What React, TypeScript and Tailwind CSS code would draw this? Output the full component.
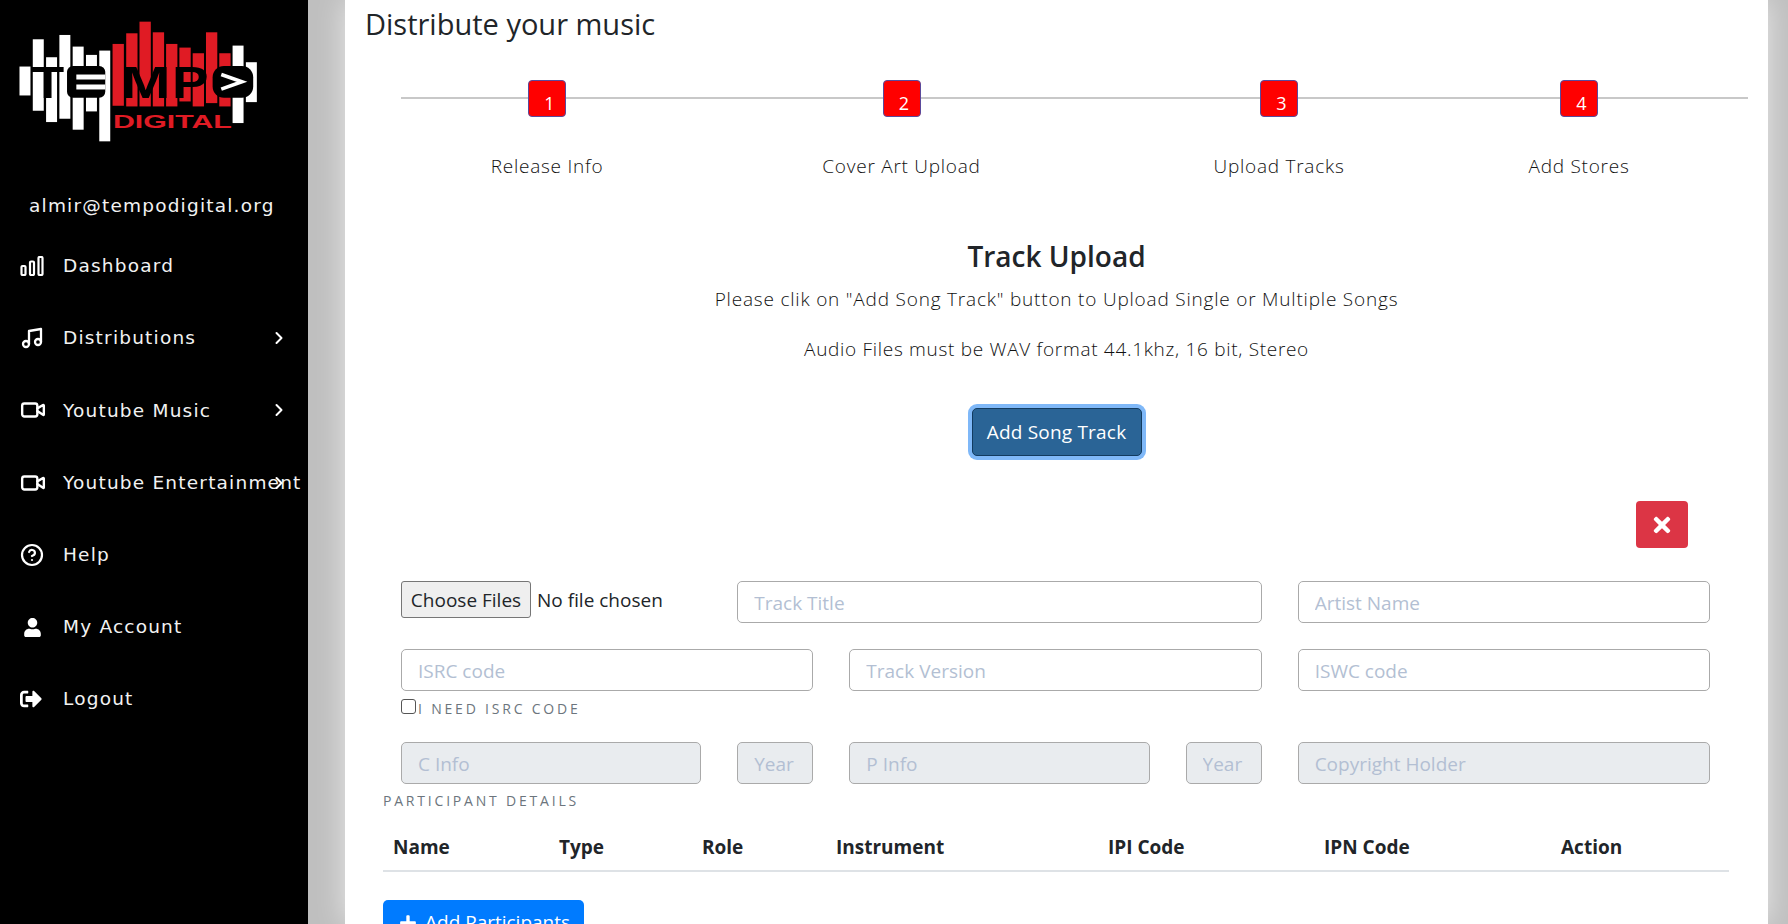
import React from "react";
import { ChevronRight, CircleHelp, Video } from "lucide-react";
import { FaPlus, FaSignOutAlt, FaTimes, FaUser } from "react-icons/fa";

const whiteBars = [
  [57, 200, 87],
  [97, 118, 215],
  [137, 172, 195],
  [177, 105, 252],
  [217, 140, 250],
  [257, 165, 170],
  [297, 152, 273],
  [698, 137, 233],
  [738, 187, 120],
];

const redBars = [
  [337, 132, 186],
  [378, 100, 220],
  [418, 65, 255],
  [458, 97, 223],
  [498, 132, 188],
  [538, 143, 162],
  [578, 160, 160],
  [618, 97, 213],
  [658, 160, 160],
];

const Logo = () => (
  <svg viewBox="50 60 730 370" className="w-[243px] h-[123px]">
    {whiteBars.map(([x, y, h]) => (
      <rect key={x} x={x} y={y} width={33} height={h} fill="#fff" />
    ))}
    {redBars.map(([x, y, h]) => (
      <rect key={x} x={x} y={y} width={34} height={h} fill="#e01b24" />
    ))}
    <g fontFamily="Liberation Sans, sans-serif" fontWeight="700" fontSize="134" fill="#000">
      <text x={92} y={294} textLength={100} lengthAdjust="spacingAndGlyphs">T</text>
      <text x={362} y={294} textLength={150} lengthAdjust="spacingAndGlyphs">M</text>
      <text x={516} y={294} textLength={110} lengthAdjust="spacingAndGlyphs">P</text>
    </g>
    <rect x={200} y={198} width={115} height={96} rx={18} fill="#000" />
    <rect x={228} y={224} width={87} height={15} fill="#fff" />
    <rect x={228} y={254} width={87} height={15} fill="#fff" />
    <rect x={638} y={198} width={122} height={96} rx={34} fill="#000" />
    <path d="M664 224 L726 246 L664 268" fill="none" stroke="#fff" strokeWidth="11" />
    <text x={338} y={385} fontFamily="Liberation Sans, sans-serif" fontWeight="700" fontSize="56" fill="#e01b24" textLength={358} lengthAdjust="spacingAndGlyphs">
      DIGITAL
    </text>
  </svg>
);

const BarsIcon = () => (
  <svg viewBox="0 0 24 20" className="w-6 h-5" fill="none" stroke="#fff" strokeWidth="2.2">
    <rect x="1.5" y="10" width="4" height="9" rx="1" />
    <rect x="10" y="5.5" width="4" height="13.5" rx="1" />
    <rect x="18.5" y="1" width="4" height="18" rx="1" />
  </svg>
);

const MusicIcon = () => (
  <svg viewBox="0 0 24 24" className="w-6 h-6" fill="none" stroke="#fff" strokeWidth="2.3" strokeLinecap="round" strokeLinejoin="round">
    <path d="M9 18V5l12-2v13" />
    <circle cx="6" cy="18" r="3" />
    <circle cx="18" cy="16" r="3" />
  </svg>
);

const menu = [
  { label: "Dashboard", icon: <BarsIcon /> },
  { label: "Distributions", icon: <MusicIcon />, arrow: true },
  { label: "Youtube Music", icon: <Video size={26} strokeWidth={2.2} />, arrow: true },
  { label: "Youtube Entertainment", icon: <Video size={26} strokeWidth={2.2} />, arrow: true },
  { label: "Help", icon: <CircleHelp size={24} strokeWidth={2.2} /> },
  { label: "My Account", icon: <FaUser size={19} className="ml-[3px]" /> },
  { label: "Logout", icon: <FaSignOutAlt size={22} /> },
];

const Sidebar = () => (
  <aside className="w-[308px] shrink-0 h-full bg-black text-white overflow-hidden font-['DejaVu_Sans',sans-serif]">
    <div className="pl-[17px] pt-[20px]">
      <Logo />
    </div>
    <p className="mt-[51px] pl-[29px] text-[18.5px] leading-[24px] tracking-[1.2px] text-[#f2f2f2]">almir@tempodigital.org</p>
    <nav className="mt-[12px] flex flex-col">
      {menu.map((item) => (
        <div key={item.label} className="relative h-[72.2px] flex items-center pl-[20px] whitespace-nowrap">
          <span className="w-[43px] flex justify-start shrink-0">{item.icon}</span>
          <span className="text-[18.5px] tracking-[1.2px] text-[#f2f2f2]">{item.label}</span>
          {item.arrow && <ChevronRight size={20} strokeWidth={2.4} className="absolute left-[269px] top-1/2 -translate-y-1/2" />}
        </div>
      ))}
    </nav>
  </aside>
);

const steps = [
  { n: 1, label: "Release Info", w: "w-[292px]" },
  { n: 2, label: "Cover Art Upload", w: "w-[417px]" },
  { n: 3, label: "Upload Tracks", w: "w-[338px]" },
  { n: 4, label: "Add Stores", w: "w-[262px]" },
];

const Stepper = () => (
  <div className="relative mt-[32px] ml-[36px] h-[102px]">
    <div className="absolute top-[17px] left-0 right-0 h-[2px] bg-[#c8c8c8]" />
    <div className="relative flex">
      {steps.map((s) => (
        <div key={s.n} className={`${s.w} flex flex-col items-center`}>
          <div className="w-[38px] h-[37px] rounded-[4px] bg-[#ff0000] border border-[#5a4a9c] flex items-end justify-center pl-[5px] text-white text-[18px] leading-[25px]">
            {s.n}
          </div>
          <p className="mt-[34px] text-[19px] leading-[30px] tracking-[0.75px] font-light text-[#111] whitespace-nowrap">{s.label}</p>
        </div>
      ))}
    </div>
  </div>
);

const inputCls =
  "w-full h-[42px] rounded-[5px] border border-[#aaa] bg-white px-[16px] pt-[2px] text-[19px] placeholder:text-[#b3bfd3] outline-none";
const disabledCls =
  "w-full h-[42px] rounded-[5px] border border-[#aaa] bg-[#e9ecef] px-[16px] pt-[2px] text-[19px] placeholder:text-[#b3bfd3] outline-none";

const TrackForm = () => (
  <div className="ml-[36px] w-[1309px]">
    <div className="grid grid-cols-12 gap-x-9">
      <div className="col-span-3">
        <input
          type="file"
          multiple
          className="w-full text-[19px] leading-[37px] text-[#212529] file:h-[37px] file:w-[130px] file:mr-[6px] file:bg-[#efefef] file:border file:border-[#767676] file:rounded-[3px] file:text-[19px]"
        />
      </div>
      <div className="col-span-5">
        <input className={inputCls} placeholder="Track Title" />
      </div>
      <div className="col-span-4">
        <input className={inputCls} placeholder="Artist Name" />
      </div>
    </div>

    <div className="mt-[26px] grid grid-cols-12 gap-x-9">
      <div className="col-span-4">
        <input className={inputCls} placeholder="ISRC code" />
        <label className="mt-[8px] flex items-start h-[21px]">
          <input type="checkbox" className="w-[15px] h-[15px] appearance-none border border-[#555] rounded-[3px] bg-white" />
          <span className="ml-[2px] mt-[1px] text-[14px] leading-[18px] tracking-[2.8px] text-[#6c757d]">I NEED ISRC CODE</span>
        </label>
      </div>
      <div className="col-span-4">
        <input className={inputCls} placeholder="Track Version" />
      </div>
      <div className="col-span-4">
        <input className={inputCls} placeholder="ISWC code" />
      </div>
    </div>

    <div className="mt-[22px] grid grid-cols-12 gap-x-9">
      <div className="col-span-3">
        <input disabled className={disabledCls} placeholder="C Info" />
      </div>
      <div className="col-span-1">
        <input disabled className={disabledCls} placeholder="Year" />
      </div>
      <div className="col-span-3">
        <input disabled className={disabledCls} placeholder="P Info" />
      </div>
      <div className="col-span-1">
        <input disabled className={disabledCls} placeholder="Year" />
      </div>
      <div className="col-span-4">
        <input disabled className={disabledCls} placeholder="Copyright Holder" />
      </div>
    </div>
  </div>
);

const headers = [
  { label: "Name", w: "w-[166px]" },
  { label: "Type", w: "w-[143px]" },
  { label: "Role", w: "w-[134px]" },
  { label: "Instrument", w: "w-[272px]" },
  { label: "IPI Code", w: "w-[216px]" },
  { label: "IPN Code", w: "w-[237px]" },
  { label: "Action", w: "" },
];

const Participants = () => (
  <div className="ml-[18px] w-[1346px]">
    <p className="mt-[8px] text-[14px] leading-[18px] tracking-[2.8px] text-[#6c757d]">PARTICIPANT DETAILS</p>
    <div className="mt-[20px] h-[42px] pl-[10px] pb-[5px] flex items-center border-b-2 border-[#dee2e6] text-[19px] font-bold text-[#212529]">
      {headers.map((h) => (
        <span key={h.label} className={h.w}>
          {h.label}
        </span>
      ))}
    </div>
    <button className="mt-[28px] w-[201px] h-[45px] rounded-[5px] bg-[#007bff] text-white text-[19px] flex items-center pl-[16px] gap-[8px]">
      <FaPlus size={18} />
      Add Participants
    </button>
  </div>
);

export default function App() {
  return (
    <div className="flex h-screen w-full overflow-hidden bg-white font-['Open_Sans',sans-serif] text-[#212529]">
      <Sidebar />
      <main className="flex-1 min-w-0 h-full overflow-hidden bg-[#bfbfbf] pl-[37px] pr-[20px]">
        <div className="h-full bg-white px-[20px] shadow-[0_0_28px_rgba(255,255,255,0.65)]">
          <h1 className="text-[29px] leading-[48px] font-normal text-[#212529]">Distribute your music</h1>

          <Stepper />

          <div className="mt-[54px] text-center">
            <h2 className="text-[28px] leading-[40px] font-semibold">Track Upload</h2>
            <p className="mt-[8px] text-[19px] leading-[30px] tracking-[0.8px] font-light text-[#111]">
              Please clik on "Add Song Track" button to Upload Single or Multiple Songs
            </p>
            <p className="mt-[20px] text-[19px] leading-[30px] tracking-[0.7px] font-light text-[#111]">
              Audio Files must be WAV format 44.1khz, 16 bit, Stereo
            </p>
            <button className="mt-[44px] w-[170px] h-[48px] rounded-[5px] bg-[#2a6496] border border-[#123b60] text-white text-[19px] tracking-[0.2px] ring-[4px] ring-[#7fb8f8]">
              Add Song Track
            </button>
          </div>

          <div className="mt-[45px] pr-[60px] flex justify-end">
            <button className="w-[52px] h-[47px] rounded-[4px] bg-[#dc3545] text-white flex items-center justify-center">
              <FaTimes size={24} />
            </button>
          </div>

          <div className="mt-[33px]">
            <TrackForm />
            <Participants />
          </div>
        </div>
      </main>
    </div>
  );
}
